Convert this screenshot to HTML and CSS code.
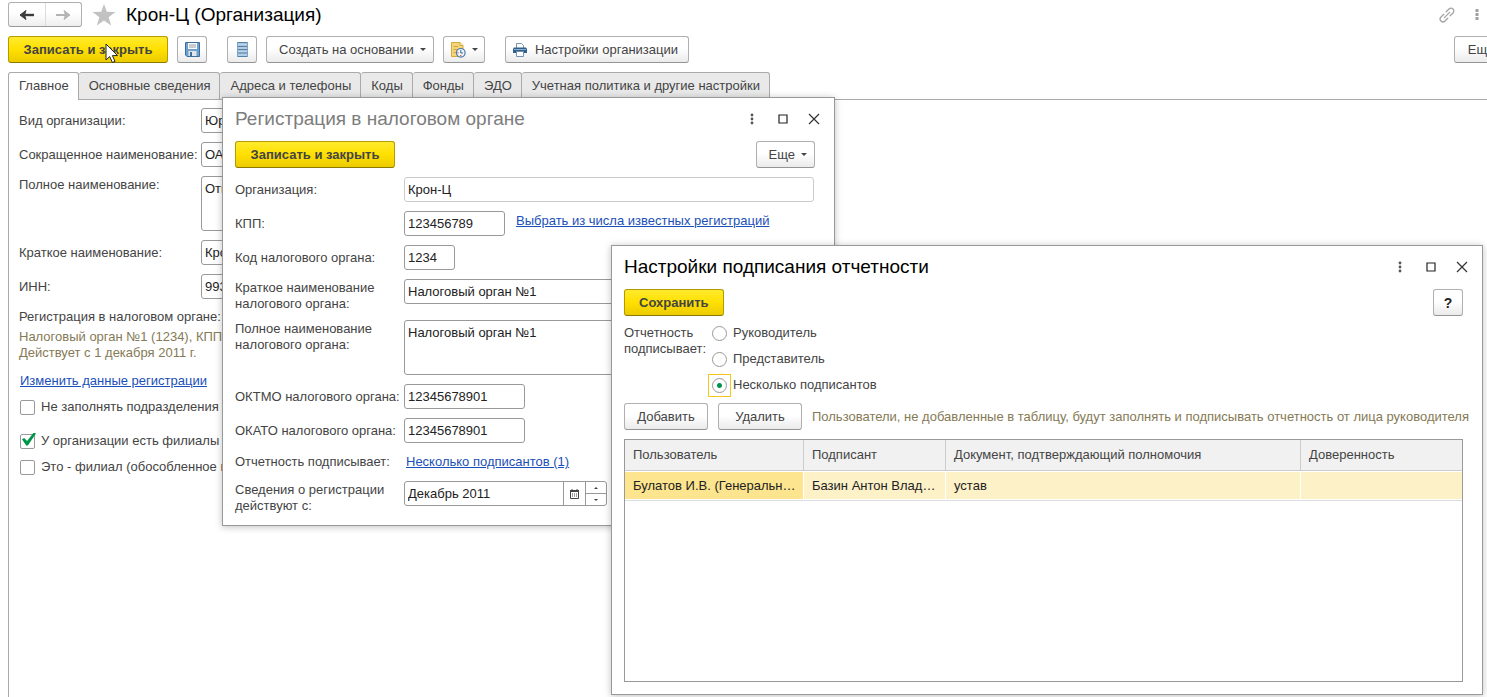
FILE: index.html
```html
<!DOCTYPE html>
<html lang="ru">
<head>
<meta charset="utf-8">
<title>Крон-Ц (Организация)</title>
<link rel="stylesheet" href="styles.css">
</head>
<body>
<main class="workspace">
  <header class="titlebar">
    <div class="nav">
      <button class="nav-btn" aria-label="Назад"><svg width="16" height="12" viewBox="0 0 16 12"><path d="M15 6H4" stroke="#3c3c3c" stroke-width="2.4"/><path d="M1 6L7 1.5L5.500 6L7 10.500Z" fill="#3c3c3c" stroke="#3c3c3c"/></svg></button>
      <button class="nav-btn" aria-label="Вперед"><svg width="16" height="12" viewBox="0 0 16 12"><path d="M1 6H12" stroke="#b4b4b4" stroke-width="2"/><path d="M15 6L9 1.5L10.500 6L9 10.500Z" fill="#b4b4b4" stroke="#b4b4b4"/></svg></button>
    </div>
    <svg class="star" width="24" height="22" viewBox="0 0 24 22"><path d="M12 0L14.8 7.8L23.5 8L16.6 13.2L19.2 21.5L12 16.6L4.8 21.5L7.4 13.2L.5 8L9.2 7.8Z" fill="#c2c2c2"/></svg>
    <h1 class="title">Крон-Ц (Организация)</h1>
    <div class="title-icons">
      <svg width="16" height="16" viewBox="0 0 16 16" fill="none" stroke="#a3a3a3" stroke-width="1.3" stroke-linecap="round"><path d="M7.2 4.8L10 2A2.8 2.8 0 0 1 14 6L11.2 8.8M8.8 11.2L6 14A2.8 2.8 0 0 1 2 10L4.800 7.2M5.400 10.600L10.600 5.400"/></svg>
      <svg width="4" height="12" viewBox="0 0 4 12" fill="#a0a0a0"><rect x=".5" width="3" height="3"/><rect x=".5" y="4" width="3" height="3"/><rect x=".5" y="8" width="3" height="3"/></svg>
    </div>
  </header>

  <div class="toolbar">
    <button class="btn primary">Записать и закрыть</button>
    <button class="btn icon" aria-label="Записать"><svg width="15" height="15" viewBox="0 0 15 15"><path d="M.5 .5H14.500V14.500H2L.5 13Z" fill="#6f9fcc" stroke="#3e6e9f"/><path d="M3 1H12V7H3Z" fill="#fff"/><path d="M4 3H11M4 5H11" stroke="#8a9aa8"/><path d="M3.500 9H11.500V14H3.500Z" fill="#dfe6ec"/><path d="M5 10H7V14H5Z" fill="#3e6e9f"/></svg></button>
    <button class="btn icon spaced" aria-label="Список"><svg width="11" height="15" viewBox="0 0 11 15"><path d="M.5 .5H10.500V14.500H.5Z" fill="#a8c6e0"/><path d="M0 .5H11M0 4.500H11M0 7.500H11M0 11H11M0 14.500H11" stroke="#5780a6"/><path d="M.5 0V15M10.500 0V15" stroke="#7fa3c4"/><path d="M1 2.500H10M1 6H10M1 9.500H10M1 13H10" stroke="#bcd4e8"/></svg></button>
    <button class="btn menu">Создать на основании<span class="caret"></span></button>
    <button class="btn tight" aria-label="Напоминание"><svg width="16" height="16" viewBox="0 0 16 16"><path d="M1.500 .5H10L13 3.500V14.500H1.500Z" fill="#f3d679" stroke="#d5ab3f"/><path d="M10 .5V3.500H13" fill="#fff3c6" stroke="#d5ab3f"/><path d="M3.500 4.500H8M3.500 7.500H7M3.500 10.500H6" stroke="#d0a540"/><circle cx="10.800" cy="10.800" r="4.300" fill="#eef5ff" stroke="#4c78a8" stroke-width="1.200"/><path d="M10.800 8V11H13" fill="none" stroke="#3c6491"/><path d="M10.300 13.500H11.300M7.500 10.800H8.500" stroke="#d22"/></svg><span class="caret"></span></button>
    <button class="btn print spaced"><svg width="14" height="14" viewBox="0 0 14 14"><path d="M3.500 5V.5H8.500L10.500 2.500V5" fill="#fff" stroke="#7893ad"/><path d="M1 4.500H13L14 6V10H0V6Z" fill="#2f608c"/><path d="M1 6.500H13" stroke="#8eb0cf"/><path d="M3.500 8.500H10.500V13.500H3.500Z" fill="#fff" stroke="#7893ad"/></svg>Настройки организации</button>
    <button class="btn menu more-cut">Еще<span class="caret"></span></button>
  </div>

  <nav class="tabs">
    <button class="tab active">Главное</button>
    <button class="tab">Основные сведения</button>
    <button class="tab">Адреса и телефоны</button>
    <button class="tab">Коды</button>
    <button class="tab">Фонды</button>
    <button class="tab">ЭДО</button>
    <button class="tab">Учетная политика и другие настройки</button>
  </nav>

  <section class="panel">
    <div class="form main-form">
      <label for="kind">Вид организации:</label>
      <select id="kind" class="field"><option>Юридическое лицо</option></select>
      <label for="short">Сокращенное наименование:</label>
      <input id="short" class="field" value="ОАО Крон-Ц">
      <label for="full" class="top">Полное наименование:</label>
      <textarea id="full" class="field area">Открытое</textarea>
      <label for="brief">Краткое наименование:</label>
      <input id="brief" class="field" value="Крон-Ц">
      <label for="inn">ИНН:</label>
      <input id="inn" class="field" value="993">
    </div>
    <p class="reg-head">Регистрация в налоговом органе:</p>
    <p class="note">Налоговый орган №1 (1234), КПП<br>Действует с 1 декабря 2011 г.</p>
    <a class="link edit-link" href="#">Изменить данные регистрации</a>
    <label class="check"><input type="checkbox">Не заполнять подразделения в</label>
    <label class="check apart"><input type="checkbox" checked>У организации есть филиалы (</label>
    <label class="check"><input type="checkbox">Это - филиал (обособленное по</label>
  </section>
</main>

<section class="window reg-window">
  <header class="win-head">
    <h2 class="title muted">Регистрация в налоговом органе</h2>
    <div class="win-icons">
      <button class="win-btn" aria-label="Меню"><svg width="12" height="12" viewBox="0 0 12 12" fill="#555"><circle cx="6" cy="2" r="1.400"/><circle cx="6" cy="6" r="1.400"/><circle cx="6" cy="10" r="1.400"/></svg></button>
      <button class="win-btn" aria-label="Развернуть"><svg width="12" height="12" viewBox="0 0 12 12"><path d="M2 2H10V10H2Z" fill="none" stroke="#222" stroke-width="1.200"/></svg></button>
      <button class="win-btn" aria-label="Закрыть"><svg width="12" height="12" viewBox="0 0 12 12"><path d="M1 1L11 11M11 1L1 11" stroke="#333" stroke-width="1.200"/></svg></button>
    </div>
  </header>
  <div class="win-bar">
    <button class="btn primary">Записать и закрыть</button>
    <button class="btn menu">Еще<span class="caret"></span></button>
  </div>
  <div class="form reg-form">
    <label for="org">Организация:</label>
    <input id="org" class="field readonly" value="Крон-Ц" readonly>
    <label for="kpp">КПП:</label>
    <div class="inline"><input id="kpp" class="field w-kpp" value="123456789"><a class="link" href="#">Выбрать из числа известных регистраций</a></div>
    <label for="code">Код налогового органа:</label>
    <input id="code" class="field w-code" value="1234">
    <label for="tax-brief" class="two">Краткое наименование налогового органа:</label>
    <input id="tax-brief" class="field" value="Налоговый орган №1">
    <label for="tax-full" class="two">Полное наименование налогового органа:</label>
    <textarea id="tax-full" class="field area">Налоговый орган №1</textarea>
    <label for="oktmo">ОКТМО налогового органа:</label>
    <input id="oktmo" class="field w-okt" value="12345678901">
    <label for="okato">ОКАТО налогового органа:</label>
    <input id="okato" class="field w-okt" value="12345678901">
    <span class="lbl">Отчетность подписывает:</span>
    <a class="link signers" href="#">Несколько подписантов (1)</a>
    <label for="since" class="two">Сведения о регистрации действуют с:</label>
    <div class="field date">
      <input id="since" value="Декабрь 2011">
      <button class="date-btn" aria-label="Календарь"><svg width="9" height="10" viewBox="0 0 9 10"><path d="M.5 1.500H8.500V9.500H.5Z" fill="none" stroke="#444"/><path d="M0 1H9V3H0Z" fill="#444"/><path d="M2 0V2M7 0V2" stroke="#444"/><path d="M2 5H7.500M2 7H7.500" stroke="#444" stroke-dasharray="1 1"/></svg></button>
      <span class="spin"><button aria-label="Больше"><span class="up"></span></button><button aria-label="Меньше"><span class="down"></span></button></span>
    </div>
  </div>
</section>

<section class="window sign-window">
  <header class="win-head">
    <h2 class="title">Настройки подписания отчетности</h2>
    <div class="win-icons">
      <button class="win-btn" aria-label="Меню"><svg width="12" height="12" viewBox="0 0 12 12" fill="#555"><circle cx="6" cy="2" r="1.400"/><circle cx="6" cy="6" r="1.400"/><circle cx="6" cy="10" r="1.400"/></svg></button>
      <button class="win-btn" aria-label="Развернуть"><svg width="12" height="12" viewBox="0 0 12 12"><path d="M2 2H10V10H2Z" fill="none" stroke="#222" stroke-width="1.200"/></svg></button>
      <button class="win-btn" aria-label="Закрыть"><svg width="12" height="12" viewBox="0 0 12 12"><path d="M1 1L11 11M11 1L1 11" stroke="#333" stroke-width="1.200"/></svg></button>
    </div>
  </header>
  <div class="win-bar">
    <button class="btn primary">Сохранить</button>
    <button class="btn help">?</button>
  </div>
  <div class="signer" role="radiogroup" aria-labelledby="signer-label">
    <span id="signer-label" class="signer-label">Отчетность подписывает:</span>
    <div class="radios">
      <label class="radio"><span class="ring"><input type="radio" name="signer"></span>Руководитель</label>
      <label class="radio"><span class="ring"><input type="radio" name="signer"></span>Представитель</label>
      <label class="radio"><span class="ring focus"><input type="radio" name="signer" checked></span>Несколько подписантов</label>
    </div>
  </div>
  <div class="actions">
    <button class="btn action">Добавить</button>
    <button class="btn action">Удалить</button>
    <span class="note hint">Пользователи, не добавленные в таблицу, будут заполнять и подписывать отчетность от лица руководителя</span>
  </div>
  <div class="grid">
    <table>
      <colgroup><col class="c1"><col class="c2"><col class="c3"><col></colgroup>
      <thead><tr><th>Пользователь</th><th>Подписант</th><th>Документ, подтверждающий полномочия</th><th>Доверенность</th></tr></thead>
      <tbody><tr><td class="current">Булатов И.В. (Генеральн…</td><td>Базин Антон Влад…</td><td>устав</td><td></td></tr></tbody>
    </table>
  </div>
</section>

<svg class="cursor" width="14" height="21" viewBox="0 0 14 21"><path d="M1 1V17L4.700 13.500L7.400 19.500L10 18.300L7.400 12.600H12.500Z" fill="#fff" stroke="#222"/></svg>
</body>
</html>
```

FILE: styles.css
```css
* { box-sizing: border-box; }

body {
  margin: 0;
  height: 100vh;
  overflow: hidden;
  position: relative;
  background: #fff;
  color: #444;
  font: 13px/16px "Liberation Sans", Arial, sans-serif;
}

button, input, select, textarea {
  font: inherit;
  color: inherit;
  margin: 0;
}

h1, h2, p { margin: 0; }

svg { display: block; flex: none; }

.workspace {
  height: 100%;
  padding: 2px 0 0 8px;
  display: flex;
  flex-direction: column;
  overflow: hidden;
}

.titlebar { display: flex; align-items: center; height: 25px; }

.nav {
  display: flex;
  width: 74px;
  height: 25px;
  border: 1px solid #b0b0b0;
  border-bottom-color: #999;
  border-radius: 3px;
  background: linear-gradient(#fff 40%, #eee);
}

.nav-btn {
  flex: 1;
  display: flex;
  align-items: center;
  justify-content: center;
  padding: 0;
  border: 0;
  background: none;
}

.nav-btn + .nav-btn { border-left: 1px solid #ddd; }

.star { margin: 0 10px; }

.title {
  font-size: 19px;
  line-height: 24px;
  font-weight: 400;
  color: #000;
}

.title.muted { color: #7d7d7d; }

.title-icons {
  display: flex;
  align-items: center;
  gap: 20px;
  margin-left: auto;
  padding-right: 8px;
}

.toolbar { display: flex; gap: 9px; margin: 9px -28px 0 0; }

.btn {
  display: flex;
  align-items: center;
  justify-content: center;
  height: 27px;
  padding: 0 12px;
  white-space: nowrap;
  border: 1px solid #b0b0b0;
  border-bottom-color: #949494;
  border-radius: 3px;
  background: linear-gradient(#fff 45%, #ebebeb);
}

.btn.primary {
  padding: 0 14px;
  border-color: #b39b00;
  border-bottom-color: #8c7a00;
  background: linear-gradient(#ffea2e, #ffe000 50%, #eccb00);
  font-weight: 700;
}

.toolbar .primary, .reg-window .primary { min-width: 160px; }
.btn.icon { width: 30px; padding: 0; }
.btn.spaced { margin-left: 11px; }
.btn.tight { padding: 0 6px; }
.btn.menu { padding-right: 7px; }
.btn.print { gap: 8px; padding: 0 10px 0 7px; }
.btn.more-cut { width: 61px; margin-left: auto; }
.btn.help { width: 30px; padding: 0; font-size: 14px; font-weight: 700; color: #222; }

.caret {
  margin-left: 6px;
  border: 3px solid transparent;
  border-top-color: #444;
  border-bottom: 0;
}

.tabs { display: flex; margin-top: 9px; height: 27px; }

.tab {
  padding: 0 9px 0 10px;
  border: 1px solid #aaa;
  border-left-width: 0;
  border-bottom: 0;
  border-radius: 3px 3px 0 0;
  background: #e9e9e9;
  white-space: nowrap;
}

.tab.active { border-left-width: 1px; background: #fff; position: relative; padding-bottom: 2px; margin-bottom: -1px; }

.panel {
  flex: 1;
  display: flex;
  flex-direction: column;
  align-items: flex-start;
  border: solid #aaa;
  border-width: 1px 0 0 1px;
  padding: 8px 10px;
}

.form { display: grid; row-gap: 9px; align-items: start; }
.form > label, .form > .lbl { line-height: 25px; white-space: nowrap; }
.form > label.top { line-height: 16px; padding-top: 1px; }
.form > label.two { line-height: 16px; white-space: normal; padding: 1px 16px 0 0; margin-bottom: -1px; }
.main-form { grid-template-columns: 182px 420px; }

.field {
  width: 100%;
  height: 25px;
  padding: 0 3px;
  border: 1px solid #999;
  border-radius: 3px;
  background: #fff;
  color: #222;
  appearance: none;
  outline: 0;
}

.field.area { display: block; height: 55px; padding: 4px 3px; resize: none; overflow: hidden; }
.field.readonly { border-color: #ccc; }

.reg-head { margin-top: 10px; }
.note { color: #857a55; }
.reg-head + .note { margin-top: 4px; }

.link { color: #1a50b8; text-decoration: underline; }
.edit-link { margin: 12px 0 10px 1px; }

.check { display: flex; align-items: center; gap: 6px; height: 16px; padding-left: 1px; white-space: nowrap; margin-bottom: 10px; }
.check.apart { margin-top: 8px; }

.check input {
  appearance: none;
  position: relative;
  width: 15px;
  height: 15px;
  border: 1px solid #999;
  border-radius: 2px;
}

.check input:checked::before {
  content: "";
  position: absolute;
  left: 1px;
  top: -2px;
  width: 14px;
  height: 13px;
  background: #00964a;
  clip-path: polygon(0 52%, 16% 42%, 36% 66%, 84% 0, 100% 8%, 42% 100%, 30% 100%);
}

.window {
  position: absolute;
  border: 1px solid #999;
  background: #fff;
  box-shadow: 0 1px 7px rgba(0, 0, 0, .25);
  padding: 8px 19px 12px 12px;
}

.reg-window { left: 222px; top: 97px; width: 613px; }

.sign-window {
  left: 611px;
  top: 245px;
  right: 4px;
  bottom: 2px;
  display: flex;
  flex-direction: column;
}

.win-head { display: flex; justify-content: space-between; align-items: center; height: 25px; }
.win-icons { display: flex; gap: 19px; margin-right: -5px; }
.win-btn { padding: 0; border: 0; background: none; }

.win-bar { display: flex; justify-content: space-between; margin-top: 10px; }

.reg-form { grid-template-columns: 169px 1fr; margin-top: 9px; padding-right: 1px; }
.inline { display: flex; gap: 11px; }
.inline .link { padding-top: 2px; }
.field.w-kpp { width: 101px; }
.field.w-code { width: 51px; }
.field.w-okt { width: 121px; }
.form > .lbl { line-height: 20px; }
.signers { line-height: 20px; padding-left: 2px; }

.field.date { display: flex; width: 203px; padding: 0; }
.date input { flex: 1; min-width: 0; padding: 0 3px; border: 0; outline: 0; background: none; }
.date-btn { display: flex; align-items: center; justify-content: center; width: 22px; padding: 0; border: 0; border-left: 1px solid #999; background: none; }
.spin { display: flex; flex-direction: column; width: 21px; border-left: 1px solid #999; }
.spin button { flex: 1; display: flex; align-items: center; justify-content: center; padding: 0; border: 0; background: none; }
.spin button + button { border-top: 1px solid #999; }
.up, .down { border: 2px solid transparent; }
.up { border-top: 0; border-bottom-color: #444; }
.down { border-bottom: 0; border-top-color: #444; }

.signer { display: flex; margin-top: 4px; }
.signer-label { width: 84px; padding-top: 5px; }
.radio { display: flex; align-items: center; gap: 2px; height: 26px; }

.ring { display: flex; align-items: center; justify-content: center; width: 23px; height: 23px; border: 1px solid transparent; }
.ring.focus { border-color: #f5c71a; }

.ring input {
  appearance: none;
  width: 15px;
  height: 15px;
  border: 1px solid #999;
  border-radius: 50%;
}

.ring input:checked { background: radial-gradient(circle, #00964a 2px, #fff 3px); }

.actions { display: flex; align-items: center; margin-top: 5px; gap: 10px; }
.btn.action { width: 84px; flex: none; }
.hint { white-space: nowrap; }

.grid { flex: 1; margin-top: 9px; border: 1px solid #999; overflow: hidden; }

table { width: 100%; border-collapse: separate; border-spacing: 0; table-layout: fixed; }
.c1 { width: 179px; }
.c2 { width: 142px; }
.c3 { width: 355px; }

th, td {
  padding: 0 4px 0 8px;
  text-align: left;
  font-weight: 400;
  white-space: nowrap;
  overflow: hidden;
}

th { height: 31px; background: #f1f1f1; border-right: 1px solid #ccc; border-bottom: 1px solid #ccc; }
td { height: 29px; background: #fdf1c8; color: #222; border: solid #fff; border-width: 1px 1px 1px 0; box-shadow: 0 1px #ddd; }
td.current { background: #fce58e; }
th:last-child, td:last-child { border-right: 0; }

.cursor { position: absolute; left: 105px; top: 43px; }
```
